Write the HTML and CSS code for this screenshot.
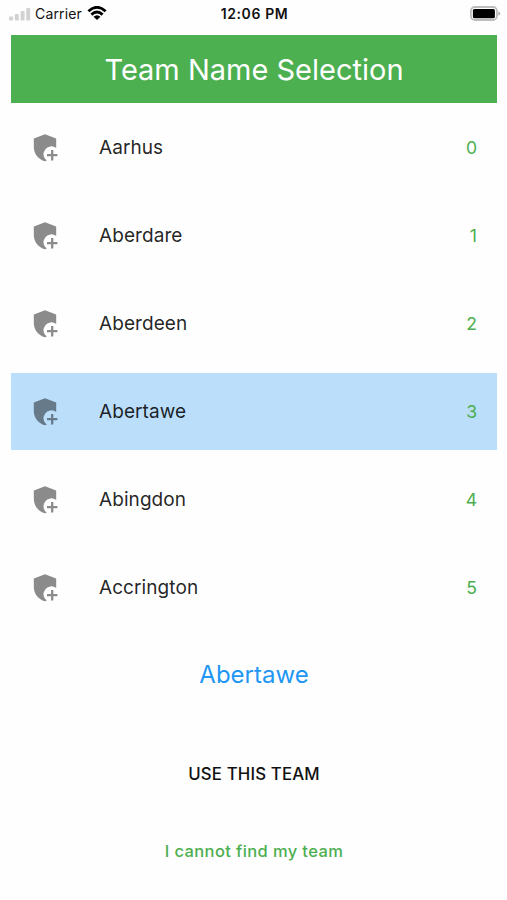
FILE: index.html
```
<!DOCTYPE html>
<html lang="en">
<head>
<meta charset="utf-8">
<title>Team Name Selection</title>
<link rel="stylesheet" href="styles.css">
</head>
<body>
<svg class="defs" aria-hidden="true">
  <symbol id="shield" viewBox="0 0 26 28">
    <path d="M12 .2 23.2 4.4V13.9A7.2 7.2 0 0 0 13.8 26.8Q12.8 27.2 12 27.3C4.8 25.2.8 19.4.8 12.7V4.4Z"/>
    <path d="M19.2 16v10.4M14 21.2h10.4" fill="none" stroke="currentColor" stroke-width="2.3"/>
  </symbol>
</svg>
<header class="status">
  <div class="network">
    <svg class="signal" viewBox="0 0 22 14"><rect x="0" y="9.5" width="4" height="4" rx="1"/><rect x="5.8" y="7" width="4" height="6.5" rx="1"/><rect x="11.6" y="4" width="4" height="9.5" rx="1"/><rect x="17.2" y="1" width="4" height="12.5" rx="1"/></svg>
    <span class="carrier">Carrier</span>
    <svg class="wifi" viewBox="0 0 20 14"><path d="M1.4 5.2Q10-2.6 18.6 5.2M4.4 8.6Q10 3.4 15.6 8.6" fill="none" stroke="currentColor" stroke-width="2.8"/><path d="M6.5 10.8Q10 7.8 13.5 10.8L10 14Z"/></svg>
  </div>
  <span class="time">12:06 PM</span>
  <svg class="battery" viewBox="0 0 32 16"><rect x="1.9" y="1" width="26" height="13" rx="4" fill="#fff" stroke="#bcbcbc" stroke-width="1.8"/><rect x="3.9" y="3" width="22" height="9.2" rx="1.5"/><path d="M29.4 5.2Q33 7.5 29.4 9.8Z" fill="#a8a8a8"/></svg>
</header>
<main class="screen">
  <h1 class="title">Team Name Selection</h1>
  <ul class="teams">
    <li class="team"><svg class="shield"><use href="#shield"/></svg><span class="name">Aarhus</span><span class="index">0</span></li>
    <li class="team"><svg class="shield"><use href="#shield"/></svg><span class="name">Aberdare</span><span class="index">1</span></li>
    <li class="team"><svg class="shield"><use href="#shield"/></svg><span class="name">Aberdeen</span><span class="index">2</span></li>
    <li class="team selected"><svg class="shield"><use href="#shield"/></svg><span class="name">Abertawe</span><span class="index">3</span></li>
    <li class="team"><svg class="shield"><use href="#shield"/></svg><span class="name">Abingdon</span><span class="index">4</span></li>
    <li class="team"><svg class="shield"><use href="#shield"/></svg><span class="name">Accrington</span><span class="index">5</span></li>
  </ul>
  <p class="choice">Abertawe</p>
  <button class="use">USE THIS TEAM</button>
  <button class="missing">I cannot find my team</button>
</main>
</body>
</html>
```
FILE: styles.css
```
* { box-sizing: border-box; }
body {
  margin: 0;
  height: 900px;
  overflow: hidden;
  background: #fefefe;
  color: #111;
  font-family: Inter, "Liberation Sans", sans-serif;
}
.defs { display: none; }
.status {
  display: grid;
  grid-template-columns: 1fr auto 1fr;
  align-items: center;
  height: 35.4px;
  padding: 0 6px 8.4px 9px;
}
.network { display: flex; align-items: center; }
.signal { width: 22px; height: 14px; fill: #d2d2d2; }
.carrier { margin-left: 4px; font-size: 14px; letter-spacing: 0.15px; }
.wifi { width: 20px; height: 14px; margin: -2px 0 0 5px; color: #000; }
.time { margin-left: -1px; font-size: 14px; font-weight: 600; letter-spacing: 0.6px; }
.battery { width: 32px; height: 16px; justify-self: end; }
.screen { display: flex; flex-direction: column; margin: 0 10px 0 11px; }
.title {
  margin: 0;
  height: 68px;
  line-height: 70px;
  background: #4caf50;
  color: #fff;
  text-align: center;
  font-size: 29px;
  font-weight: 400;
}
.teams {
  display: grid;
  gap: 10.5px;
  margin: 5.2px 0 0;
  padding: 0;
  list-style: none;
}
.team {
  display: flex;
  align-items: center;
  height: 77.5px;
  padding: 0 20px 0 22px;
  font-size: 19px;
}
.selected { background: #bbdefb; }
.shield { width: 26px; height: 28px; margin-top: 2px; fill: currentColor; color: rgba(0, 0, 0, 0.45); }
.name { margin-left: 40px; color: rgba(0, 0, 0, 0.87); letter-spacing: 0.08px; }
.index { margin-left: auto; color: #4caf50; font-size: 17.6px; }
.choice {
  margin: 34px 0 0;
  line-height: 30px;
  text-align: center;
  color: #2196f3;
  font-size: 24px;
}
button {
  padding: 0;
  border: 0;
  background: none;
  font-family: inherit;
  line-height: 24px;
  text-align: center;
}
.use { margin-top: 72px; color: #111; font-size: 16.8px; font-weight: 500; letter-spacing: 0.15px; }
.missing { margin-top: 53px; color: #4caf50; font-size: 16.5px; font-weight: 500; letter-spacing: 0.38px; }
```
